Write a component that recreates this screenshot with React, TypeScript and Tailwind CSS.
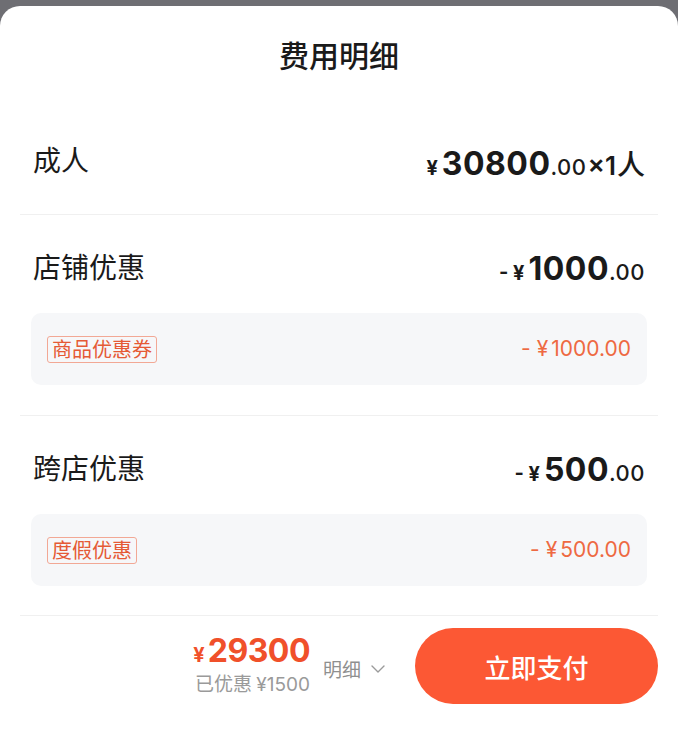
import React from "react";

const cjk = { fontFamily: '"Noto Sans CJK SC", "Noto Sans", sans-serif' };
const num = { fontFamily: 'Inter, "Noto Sans CJK SC", sans-serif' };

function Amount({ prefix, big, small, suffix }: { prefix: string; big: string; small: string; suffix?: boolean }) {
  return (
    <div className="flex items-baseline text-[#1a1a1a] mt-[9px]" style={num}>
      <span className="text-[20px] font-bold mr-[4px] whitespace-pre">{prefix}</span>
      <span className="text-[32px] font-bold leading-none tracking-[0.5px]">{big}</span>
      <span className="text-[22px] font-medium tracking-[0.5px]">{small}</span>
      {suffix ? (
        <>
          <span className="text-[26px] font-semibold ml-[1px]">×1</span>
          <span className="text-[28px] font-medium ml-[1px]" style={cjk}>
            人
          </span>
        </>
      ) : null}
    </div>
  );
}

function SubBox({ tag, value }: { tag: string; value: string }) {
  return (
    <div className="mx-[-1px] mt-[25px] h-[72px] rounded-[10px] bg-[#f6f7f9] flex items-center justify-between pl-[16px] pr-[16px]">
      <span
        className="border border-[#f2a895] rounded-[3px] px-[4px] h-[27px] flex items-center text-[20px] text-[#e55a35] leading-none"
        style={cjk}
      >
        {tag}
      </span>
      <span className="text-[21px] text-[#ee6942] flex items-baseline" style={num}>
        <span>-</span>
        <span className="ml-[6px] mr-[3px]">¥</span>
        <span>{value}</span>
      </span>
    </div>
  );
}

export default function App() {
  return (
    <div className="w-[678px] h-[733px] bg-[#6e6e73] pt-[6px] overflow-hidden">
      <div className="bg-white rounded-t-[20px] h-full flex flex-col" style={cjk}>
        <div className="h-[102px] pb-[6px] flex items-center justify-center text-[30px] font-medium text-[#1a1a1a]">
          费用明细
        </div>

        <div className="px-[33px] pt-[29px] pb-[33px]">
          <div className="h-[44px] flex items-center justify-between">
            <span className="text-[28px] text-[#1a1a1a]">成人</span>
            <Amount prefix="¥" big="30800" small=".00" suffix />
          </div>
        </div>
        <div className="mx-[20px] h-px bg-[#f0f0f0]" />

        <div className="px-[32px] pt-[29px] pb-[30px]">
          <div className="h-[44px] flex items-center justify-between px-[1px]">
            <span className="text-[28px] text-[#1a1a1a]">店铺优惠</span>
            <Amount prefix="- ¥" big="1000" small=".00" />
          </div>
          <SubBox tag="商品优惠券" value="1000.00" />
        </div>
        <div className="mx-[20px] h-px bg-[#f0f0f0]" />

        <div className="px-[32px] pt-[29px] pb-[29px]">
          <div className="h-[44px] flex items-center justify-between px-[1px]">
            <span className="text-[28px] text-[#1a1a1a]">跨店优惠</span>
            <Amount prefix="- ¥" big="500" small=".00" />
          </div>
          <SubBox tag="度假优惠" value="500.00" />
        </div>
        <div className="mx-[20px] h-px bg-[#f0f0f0]" />

        <div className="flex items-center justify-end pr-[20px] pt-[12px]">
          <div className="flex flex-col items-end mr-[13px] mt-[-3px]">
            <div className="flex items-baseline text-[#f0502a] leading-none" style={num}>
              <span className="text-[20px] font-bold mr-[3px]">¥</span>
              <span className="text-[32px] font-bold tracking-[-0.5px]">29300</span>
            </div>
            <div className="text-[19px] text-[#9a9a9a] mt-[6px] leading-none">
              已优惠 <span style={num}>¥1500</span>
            </div>
          </div>
          <div className="flex items-center mr-[29px] mt-[6px]">
            <span className="text-[19px] text-[#8f8f8f]">明细</span>
            <svg width="16" height="10" viewBox="0 0 16 10" className="ml-[9px]" fill="none">
              <path d="M2 2 L8 8 L14 2" stroke="#9a9a9a" strokeWidth="1.4" strokeLinecap="round" strokeLinejoin="round" />
            </svg>
          </div>
          <button className="w-[243px] h-[76px] rounded-full bg-[#fc5834] text-white text-[26px] font-medium flex items-center justify-center">
            立即支付
          </button>
        </div>
      </div>
    </div>
  );
}
